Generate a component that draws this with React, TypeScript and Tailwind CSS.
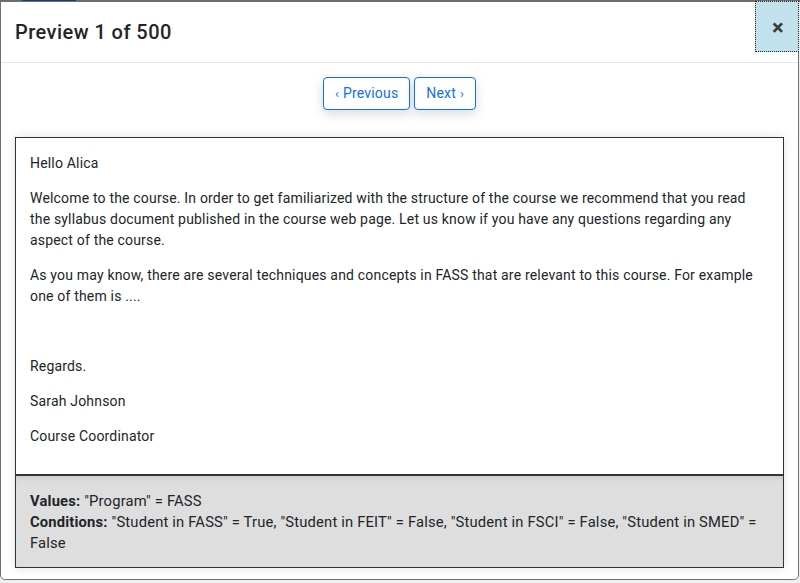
const font = { fontFamily: 'Roboto, "Liberation Sans", sans-serif' };

export default function App() {
  return (
    <div className="w-[800px] h-[583px] bg-[#efefef] overflow-hidden relative tracking-[0.18px]" style={font}>
      {/* backdrop strip at top */}
      <div className="h-[2px] bg-[#6b6b6b] flex">
        <div className="ml-[22px] w-[54px] bg-[#0b3d7c]" />
      </div>

      {/* Modal */}
      <div className="absolute left-0 top-[1px] w-[799px] h-[579px] bg-white border border-[#707070] rounded-b-[5px] flex flex-col">
        {/* Header */}
        <div className="h-[61px] flex items-center justify-between pl-[14px] border-b border-[#e6e6e6] relative">
          <h1 className="text-[20px] font-medium text-[#212529] leading-none tracking-[0.45px]">Preview 1 of 500</h1>
          <button className="absolute right-[-1px] top-[-1px] w-[44px] h-[51px] bg-[#c1e2ec] border border-dotted border-[#222] flex items-center justify-center pl-[2px] pt-[2px] text-[#3a3a3a] text-[22px] font-bold leading-none">
            ×
          </button>
        </div>

        {/* Body */}
        <div className="flex-1 flex flex-col px-[14px] pt-[14px]">
          <div className="flex justify-center gap-[4px]">
            <button className="h-[33px] px-[11px] border border-[#0d6efd] rounded-[4px] text-[#0d6efd] text-[14px] bg-white shadow-[0_4px_12px_rgba(0,0,0,0.15)] flex items-center gap-[4px]">
              <span className="text-[13px]">‹</span>Previous
            </button>
            <button className="h-[33px] px-[11px] border border-[#0d6efd] rounded-[4px] text-[#0d6efd] text-[14px] bg-white shadow-[0_4px_12px_rgba(0,0,0,0.15)] flex items-center gap-[4px]">
              Next<span className="text-[13px]">›</span>
            </button>
          </div>

          <div className="mt-[27px] shadow-[0_0_10px_rgba(0,0,0,0.12)]">
            <div className="border border-[#333] border-b-2 px-[14px] pt-[15px] pb-[12px] text-[14px] leading-[21px] text-[#212529] h-[339px]">
              <p className="mb-[14px]">Hello Alica</p>
              <p className="mb-[14px]">
                Welcome to the course. In order to get familiarized with the structure of the course we recommend that you read the syllabus document published in the course web page. Let us know if you have any questions regarding any aspect of the course.
              </p>
              <p className="mb-[14px]">
                As you may know, there are several techniques and concepts in FASS that are relevant to this course. For example one of them is ....
              </p>
              <p className="mb-[14px]">&nbsp;</p>
              <p className="mb-[14px]">Regards.</p>
              <p className="mb-[14px]">Sarah Johnson</p>
              <p className="mb-[14px]">Course Coordinator</p>
            </div>
            <div className="bg-[#dedede] border border-t-0 border-[#333] px-[14px] pt-[15px] pb-[13px] text-[14.75px] leading-[21px] text-[#212529] shadow-[inset_0_6px_8px_-6px_rgba(0,0,0,0.15)]">
              <p>
                <span className="font-bold">Values:</span> "Program" = FASS
              </p>
              <p>
                <span className="font-bold">Conditions:</span> "Student in FASS" = True, "Student in FEIT" = False, "Student in FSCI" = False, "Student in SMED" = False
              </p>
            </div>
          </div>
        </div>
      </div>
    </div>
  );
}
